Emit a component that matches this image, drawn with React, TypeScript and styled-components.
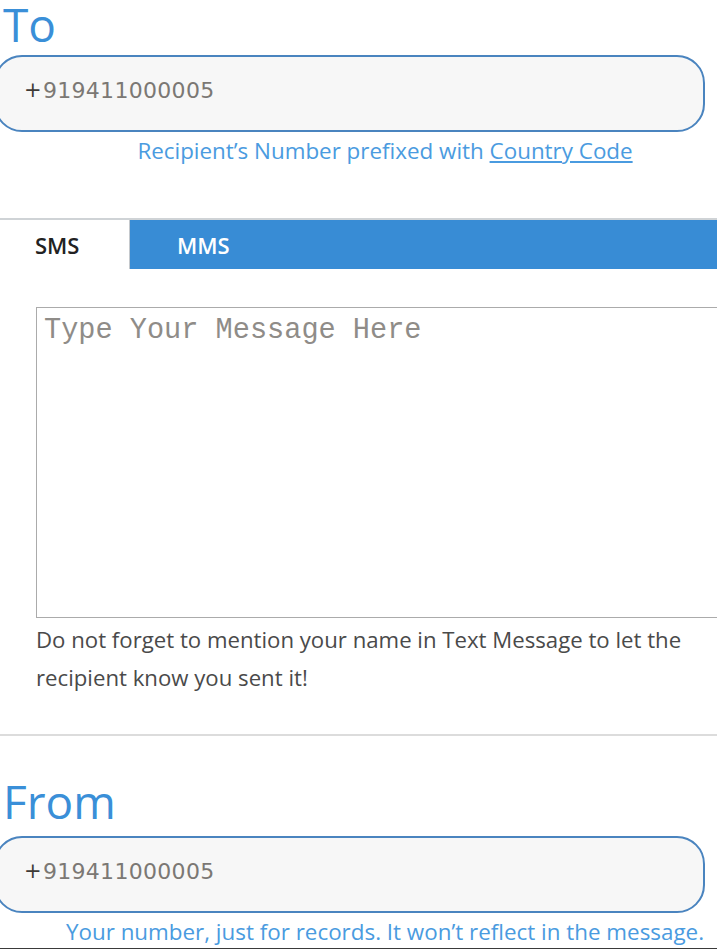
import React from "react";
import styled, { createGlobalStyle } from "styled-components";

const Global = createGlobalStyle`
  html, body { margin: 0; padding: 0; background: #ffffff; }
  body { font-family: "Open Sans", "DejaVu Sans", sans-serif; }
`;

const Page = styled.div`
  width: 717px;
  height: 950px;
  overflow: hidden;
  display: flex;
  flex-direction: column;
  background: #ffffff;
`;

const Heading = styled.h2<{ $top: number; $gap: number }>`
  margin: ${(p) => p.$top}px 0 ${(p) => p.$gap}px 0;
  padding-left: 3px;
  font-family: "Open Sans", sans-serif;
  font-weight: 400;
  font-size: 46px;
  line-height: 48px;
  color: #3a8fd8;
`;

const PhoneField = styled.div`
  box-sizing: border-box;
  margin-left: -6px;
  width: 711px;
  height: 77px;
  border: 2px solid #4a84bf;
  border-radius: 28px;
  background: #f7f7f7;
  padding: 21px 0 0 28px;
  font-family: "DejaVu Sans", Verdana, sans-serif;
  font-size: 22px;
  letter-spacing: 0.3px;
  color: #7b7874;
  display: flex;
  align-items: baseline;
`;

const Plus = styled.span`
  color: #3e3a36;
  font-size: 21px;
  margin-right: 1px;
  position: relative;
  top: -1px;
`;

const Caption = styled.p`
  margin: 5px 0 0 0;
  padding-left: 53px;
  text-align: center;
  font-family: "Open Sans", sans-serif;
  font-size: 22.4px;
  line-height: 28px;
  color: #4a9be0;
`;

const CaptionLink = styled.a`
  color: #4a9be0;
  text-decoration: underline;
`;

const TabStrip = styled.div`
  margin-top: 53px;
  border-top: 2px solid #cfd3d6;
  display: flex;
  height: 49px;
  background: #388cd5;
`;

const Tab = styled.div<{ $active?: boolean; $pad: number }>`
  box-sizing: border-box;
  display: flex;
  align-items: center;
  padding-left: ${(p) => p.$pad}px;
  flex: ${(p) => (p.$active ? "0 0 130px" : "1 1 auto")};
  background: ${(p) => (p.$active ? "#ffffff" : "#388cd5")};
  border-right: ${(p) => (p.$active ? "1px solid #c4c8cc" : "none")};
  font-family: "Open Sans", sans-serif;
  font-weight: 600;
  font-size: 22px;
  color: ${(p) => (p.$active ? "#222222" : "#ffffff")};
`;

const TabBody = styled.div`
  padding: 38px 0 0 36px;
  display: flex;
  flex-direction: column;
`;

const MessageBox = styled.textarea`
  box-sizing: border-box;
  width: 700px;
  height: 311px;
  border: 1.5px solid #ababab;
  border-radius: 0;
  padding: 6px 7px;
  resize: none;
  outline: none;
  font-family: "Liberation Mono", "Courier New", monospace;
  font-size: 28.6px;
  color: #444;
  background: #fff;
  &::placeholder {
    color: #8f8c88;
  }
`;

const Note = styled.p`
  margin: 3px 0 0 0;
  font-family: "Open Sans", sans-serif;
  font-size: 22.2px;
  line-height: 38px;
  color: #4a4a4a;
`;

const Divider = styled.hr`
  margin: 37px 0 0 0;
  border: none;
  border-top: 2px solid #dcdcdc;
  height: 0;
`;

const BottomRule = styled.div`
  margin-top: 2px;
  border-top: 1px solid #3a3a3a;
`;

const Phone: React.FC<{ number: string }> = ({ number }) => (
  <PhoneField>
    <Plus>+</Plus>
    <span>{number}</span>
  </PhoneField>
);

export default function App() {
  return (
    <>
      <Global />
      <Page>
        <Heading $top={0} $gap={7}>To</Heading>
        <Phone number="919411000005" />
        <Caption>
          Recipient’s Number prefixed with <CaptionLink href="#">Country Code</CaptionLink>
        </Caption>

        <TabStrip>
          <Tab $active $pad={35}>SMS</Tab>
          <Tab $pad={47}>MMS</Tab>
        </TabStrip>
        <TabBody>
          <MessageBox placeholder="Type Your Message Here" />
          <Note>
            Do not forget to mention your name in Text Message to let the recipient know you sent it!
          </Note>
        </TabBody>

        <Divider />

        <Heading $top={41} $gap={11}>From</Heading>
        <Phone number="919411000005" />
        <Caption>Your number, just for records. It won’t reflect in the message.</Caption>
        <BottomRule />
      </Page>
    </>
  );
}
